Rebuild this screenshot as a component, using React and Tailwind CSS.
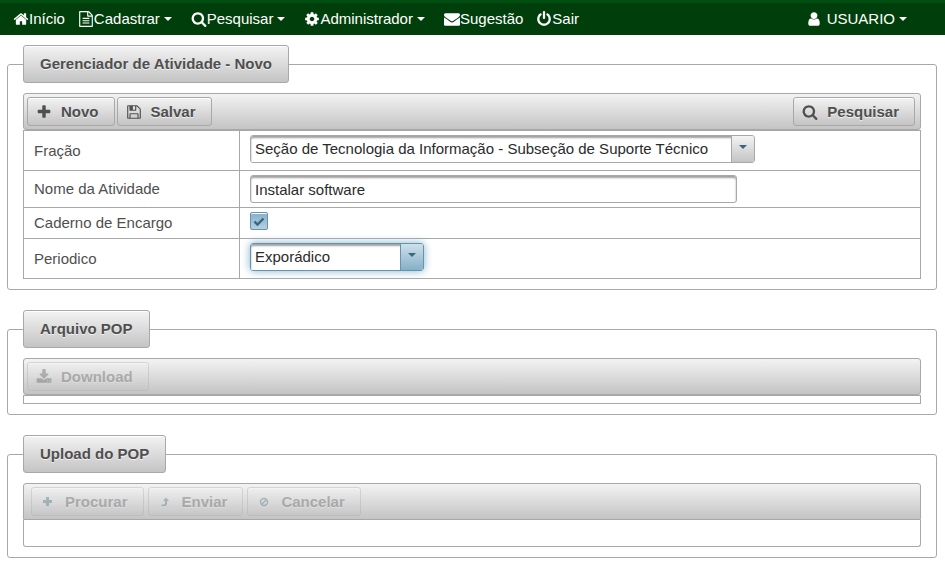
const ICONS = {
  home: "M1472 992v480q0 26-19 45t-45 19h-384v-384h-256v384h-384q-26 0-45-19t-19-45v-480q0-1 .5-3t.5-3l575-474 575 474q1 2 1 6zm223-69l-62 74q-8 9-21 11h-3q-13 0-21-7l-692-577-692 577q-12 8-24 7-13-2-21-11l-62-74q-8-10-7-23.5t11-21.5l719-599q32-26 76-26t76 26l244 204v-195q0-14 9-23t23-9h192q14 0 23 9t9 23v408l219 182q10 8 11 21.5t-7 23.5z",
  file: "M1596 380q28 28 48 76t20 88v1152q0 40-28 68t-68 28h-1344q-40 0-68-28t-28-68v-1600q0-40 28-68t68-28h896q40 0 88 20t76 48zm-444-244v376h376q-10-29-22-41l-313-313q-12-12-41-22zm384 1528v-1024h-416q-40 0-68-28t-28-68v-416h-768v1536h1280zm-1024-864q0-14 9-23t23-9h704q14 0 23 9t9 23v64q0 14-9 23t-23 9h-704q-14 0-23-9t-9-23v-64zm736 224q14 0 23 9t9 23v64q0 14-9 23t-23 9h-704q-14 0-23-9t-9-23v-64q0-14 9-23t23-9h704zm0 256q14 0 23 9t9 23v64q0 14-9 23t-23 9h-704q-14 0-23-9t-9-23v-64q0-14 9-23t23-9h704z",
  search: "M1216 832q0-185-131.5-316.5t-316.5-131.5-316.5 131.5-131.5 316.5 131.5 316.5 316.5 131.5 316.5-131.5 131.5-316.5zm512 832q0 52-38 90t-90 38q-54 0-90-38l-343-342q-179 124-399 124-143 0-273.5-55.5t-225-150-150-225-55.5-273.5 55.5-273.5 150-225 225-150 273.5-55.5 273.5 55.5 225 150 150 225 55.5 273.5q0 220-124 399l343 343q37 37 37 90z",
  cog: "M1152 896q0-106-75-181t-181-75-181 75-75 181 75 181 181 75 181-75 75-181zm512-109v222q0 12-8 23t-20 13l-185 28q-19 54-39 91 35 50 107 138 10 12 10 25t-9 23q-27 37-99 108t-94 71q-12 0-26-9l-138-108q-44 23-91 38-16 136-29 186-7 28-36 28h-222q-14 0-24.5-8.5t-11.5-21.5l-28-184q-49-16-90-37l-141 107q-10 9-25 9-14 0-25-11-126-114-165-168-7-10-7-23 0-12 8-23 15-21 51-66.5t54-70.5q-27-50-41-99l-183-27q-13-2-21-12.5t-8-23.5v-222q0-12 8-23t19-13l186-28q14-46 39-92-40-57-107-138-10-12-10-24 0-10 9-23 26-36 98.5-107.5t94.5-71.5q13 0 26 10l138 107q44-23 91-38 16-136 29-186 7-28 36-28h222q14 0 24.5 8.5t11.5 21.5l28 184q49 16 90 37l142-107q9-9 24-9 13 0 25 10 129 119 165 170 7 8 7 22 0 12-8 23-15 21-51 66.5t-54 70.5q26 50 41 98l183 28q13 2 21 12.5t8 23.5z",
  envelope: "M1792 710v794q0 66-47 113t-113 47h-1472q-66 0-113-47t-47-113v-794q44 49 101 87 362 246 497 345 57 42 92.5 65.5t94.5 48 110 24.5h2q51 0 110-24.5t94.5-48 92.5-65.5q170-123 498-345 57-39 100-87zm0-294q0 79-49 151t-122 123q-376 261-468 325-10 7-42.5 31t-54 38.5-52 32.5-57.5 27-50 9h-2q-23 0-50-9t-57.5-27-52-32.5-54-38.5-42.5-31q-91-64-262-182.5t-205-142.5q-62-42-117-115.5t-55-136.5q0-78 41.5-130t118.5-52h1472q65 0 112.5 47t47.5 113z",
  power: "M1664 896q0 156-61 298t-164 245-245 164-298 61-298-61-245-164-164-245-61-298q0-182 80.5-343t226.5-270q43-32 95.5-25t83.5 50q32 42 24.5 94.5t-49.5 84.5q-98 74-151.5 181t-53.5 228q0 104 40.5 198.5t109.5 163.5 163.5 109.5 198.5 40.5 198.5-40.5 163.5-109.5 109.5-163.5 40.5-198.5q0-121-53.5-228t-151.5-181q-42-32-49.5-84.5t24.5-94.5q31-43 84-50t95 25q146 109 226.5 270t80.5 343zm-640-768v640q0 52-38 90t-90 38-90-38-38-90v-640q0-52 38-90t90-38 90 38 38 90z",
  user: "M1536 1399q0 109-62.5 187t-150.5 78h-854q-88 0-150.5-78t-62.5-187q0-85 8.5-160.5t31.5-152 58.5-131 94-89 134.5-34.5q131 128 313 128t313-128q76 0 134.5 34.5t94 89 58.5 131 31.5 152 8.5 160.5zm-256-887q0 159-112.5 271.5t-271.5 112.5-271.5-112.5-112.5-271.5 112.5-271.5 271.5-112.5 271.5 112.5 112.5 271.5z",
  plus: "M1600 736v192q0 40-28 68t-68 28h-416v416q0 40-28 68t-68 28h-192q-40 0-68-28t-28-68v-416h-416q-40 0-68-28t-28-68v-192q0-40 28-68t68-28h416v-416q0-40 28-68t68-28h192q40 0 68 28t28 68v416h416q40 0 68 28t28 68z",
  save: "M512 1536h768v-384h-768v384zm896 0h128v-896q0-14-10-38.5t-20-34.5l-281-281q-10-10-34-20t-39-10v416q0 40-28 68t-68 28h-576q-40 0-68-28t-28-68v-416h-128v1280h128v-416q0-40 28-68t68-28h832q40 0 68 28t28 68v416zm-384-928v-320q0-13-9.5-22.5t-22.5-9.5h-192q-13 0-22.5 9.5t-9.5 22.5v320q0 13 9.5 22.5t22.5 9.5h192q13 0 22.5-9.5t9.5-22.5zm640 32v928q0 40-28 68t-68 28h-1344q-40 0-68-28t-28-68v-1344q0-40 28-68t68-28h928q40 0 88 20t76 48l280 280q28 28 48 76t20 88z",
  download: "M1344 1344q0-26-19-45t-45-19-45 19-19 45 19 45 45 19 45-19 19-45zm256 0q0-26-19-45t-45-19-45 19-19 45 19 45 45 19 45-19 19-45zm128-224v320q0 40-28 68t-68 28h-1472q-40 0-68-28t-28-68v-320q0-40 28-68t68-28h465l135 136q58 56 136 56t136-56l136-136h464q40 0 68 28t28 68zm-325-569q17 41-14 70l-448 448q-18 19-45 19t-45-19l-448-448q-31-29-14-70 17-39 59-39h256v-448q0-26 19-45t45-19h256q26 0 45 19t19 45v448h256q42 0 59 39z",
};

function Icon({ name }) {
  return (
    <svg viewBox="0 0 1792 1792" fill="currentColor" aria-hidden="true" className="size-4 shrink-0">
      <path d={ICONS[name]} />
    </svg>
  );
}

function PlusSmall() {
  return (
    <svg viewBox="0 0 16 16" className="size-4 shrink-0 text-[#38667f]" fill="currentColor" aria-hidden="true">
      <path d="M6 3h3v3h3v3h-3v3h-3v-3h-3v-3h3z" />
    </svg>
  );
}

function ArrowSmall() {
  return (
    <svg viewBox="0 0 16 16" className="size-4 shrink-0 text-[#38667f]" fill="currentColor" aria-hidden="true">
      <path d="M9 3.500l3 3.500h-2v2.500q0 2.500-2.500 2.500h-3v-1.500h2.500q1 0 1-1v-2.500h-2z" />
    </svg>
  );
}

function CancelSmall() {
  return (
    <svg viewBox="0 0 16 16" className="size-4 shrink-0 text-[#38667f]" fill="none" stroke="currentColor" strokeWidth="1.400" aria-hidden="true">
      <circle cx="8" cy="8" r="3.500" />
      <path d="M5.600 10.400l4.800-4.800" />
    </svg>
  );
}

function Caret() {
  return (
    <svg viewBox="0 0 8 4" className="ml-1 h-1 w-2 shrink-0" fill="currentColor" aria-hidden="true">
      <path d="M0 0h8l-4 4z" />
    </svg>
  );
}

function NavItem({ icon, label, menu }) {
  return (
    <a href="#" className="flex items-center whitespace-nowrap">
      <Icon name={icon} />
      {label}
      {menu && <Caret />}
    </a>
  );
}

function ToolButton({ icon, label, disabled }) {
  return (
    <button
      type="button"
      disabled={disabled}
      className="flex h-[29px] items-center gap-[9px] rounded-[3px] border border-[#a8a8a8] bg-linear-to-b from-[#f3f3f3] to-[#c4c4c4] pr-[15px] pl-2 font-bold text-[#4f4f4f] shadow-[inset_0_1px_0_#fff] [text-shadow:0_1px_0_rgba(255,255,255,0.7)] disabled:opacity-35"
    >
      {icon}
      {label}
    </button>
  );
}

function Panel({ title, children }) {
  return (
    <fieldset className="min-w-0 rounded-[3px] border border-[#a8a8a8] px-[15px] pb-[10px]">
      <legend className="rounded-[3px] border border-[#a8a8a8] bg-linear-to-b from-[#f3f3f3] to-[#c4c4c4] px-4 py-2 leading-5 font-bold text-[#4f4f4f] shadow-[inset_0_1px_0_#fff] [text-shadow:0_1px_0_rgba(255,255,255,0.7)]">
        {title}
      </legend>
      <div className="pt-[10px]">{children}</div>
    </fieldset>
  );
}

const BAR = "flex h-[37px] items-center border border-[#a8a8a8] bg-linear-to-b from-[#f3f3f3] to-[#c4c4c4]";

function SelectMenu({ id, value, width, active }) {
  return (
    <div
      className={`relative flex h-7 rounded-[3px] border ${width} ${
        active ? "border-[#6494ae] shadow-[0_0_8px_#85b2cb]" : "border-[#a8a8a8]"
      }`}
    >
      <select
        id={id}
        className="w-full appearance-none rounded-[2px] bg-white pr-6 pl-1 text-[#2b2b2b] shadow-[inset_0_2px_2px_#a0a0a0] outline-none"
      >
        <option>{value}</option>
      </select>
      <span
        className={`pointer-events-none absolute inset-y-0 right-0 flex w-[23px] justify-center rounded-r-[2px] border-l bg-linear-to-b pt-[9px] ${
          active ? "border-[#6494ae] from-[#cfe0ea] to-[#86b0c8]" : "border-[#a8a8a8] from-[#f3f3f3] to-[#c4c4c4]"
        }`}
      >
        <svg viewBox="0 0 8 4" className="h-1 w-2 text-[#38667f]" fill="currentColor" aria-hidden="true">
          <path d="M0 0h8l-4 4z" />
        </svg>
      </span>
    </div>
  );
}

function Row({ id, label, height, children }) {
  return (
    <tr className={height}>
      <th scope="row" className="w-[216px] border border-[#a8a8a8] px-[10px] text-left font-normal">
        <label htmlFor={id}>{label}</label>
      </th>
      <td className="border border-[#a8a8a8] px-[10px] pt-1 align-top">{children}</td>
    </tr>
  );
}

export default function App() {
  return (
    <div className="bg-white font-['Liberation_Sans',Arial,sans-serif] text-[15px] leading-5 text-[#4f4f4f]">
      <nav className="flex h-[35px] items-center justify-between border-t-[3px] border-[#004f11] bg-[#003f0b] pr-[38px] pl-[13px] text-white">
        <div className="flex items-center gap-[13px]">
          <NavItem icon="home" label="Início" />
          <NavItem icon="file" label="Cadastrar" menu />
          <div className="pl-1.5">
            <NavItem icon="search" label="Pesquisar" menu />
          </div>
          <div className="pl-1.5">
            <NavItem icon="cog" label="Administrador" menu />
          </div>
          <div className="pl-1.5">
            <NavItem icon="envelope" label="Sugestão" />
          </div>
          <NavItem icon="power" label="Sair" />
        </div>
        <NavItem icon="user" label={"\u00a0USUARIO"} menu />
      </nav>

      <main className="flex flex-col gap-5 pt-[10px] pr-2 pl-[7px]">
        <Panel title="Gerenciador de Atividade - Novo">
          <div className={`${BAR} gap-0.5 rounded-[3px] pr-[5px] pl-[3px]`}>
            <ToolButton icon={<Icon name="plus" />} label="Novo" />
            <ToolButton icon={<Icon name="save" />} label="Salvar" />
            <div className="ml-auto">
              <ToolButton icon={<Icon name="search" />} label="Pesquisar" />
            </div>
          </div>
          <table className="w-full table-fixed border-collapse">
            <tbody>
              <Row id="fracao" label="Fração" height="h-10">
                <SelectMenu
                  id="fracao"
                  value="Seção de Tecnologia da Informação - Subseção de Suporte Técnico"
                  width="w-[505px]"
                />
              </Row>
              <Row id="nome" label="Nome da Atividade" height="h-[37px]">
                <input
                  id="nome"
                  type="text"
                  defaultValue="Instalar software"
                  className="block h-7 w-[487px] rounded-[3px] border border-[#a8a8a8] bg-white px-1 text-[#2b2b2b] shadow-[inset_0_2px_2px_#a0a0a0] outline-none"
                />
              </Row>
              <Row id="caderno" label="Caderno de Encargo" height="h-[31px]">
                <div className="relative size-[18px]">
                  <input
                    id="caderno"
                    type="checkbox"
                    defaultChecked
                    className="block size-[18px] appearance-none rounded-[2px] border border-[#6494ae] bg-linear-to-b from-[#86b0c8] to-[#b5d0df] shadow-[inset_0_1px_0_#fff]"
                  />
                  <svg
                    viewBox="0 0 18 18"
                    className="pointer-events-none absolute inset-0 size-[18px]"
                    fill="none"
                    stroke="#38667f"
                    strokeWidth="2.400"
                    aria-hidden="true"
                  >
                    <path d="M4.500 9.500l3 3l6-6" />
                  </svg>
                </div>
              </Row>
              <Row id="periodico" label="Periodico" height="h-10">
                <SelectMenu id="periodico" value="Exporádico" width="w-[174px]" active />
              </Row>
            </tbody>
          </table>
        </Panel>

        <Panel title="Arquivo POP">
          <div className={`${BAR} rounded-[3px] pl-[3px]`}>
            <ToolButton icon={<Icon name="download" />} label="Download" disabled />
          </div>
          <div className="h-[9px] border border-[#a8a8a8]" />
        </Panel>

        <Panel title="Upload do POP">
          <div className={`${BAR} gap-1 rounded-t-[3px] pl-[7px]`}>
            <ToolButton icon={<PlusSmall />} label="Procurar" disabled />
            <ToolButton icon={<ArrowSmall />} label="Enviar" disabled />
            <ToolButton icon={<CancelSmall />} label="Cancelar" disabled />
          </div>
          <div className="h-[27px] rounded-b-[3px] border border-t-0 border-[#a8a8a8]" />
        </Panel>
      </main>
    </div>
  );
}
